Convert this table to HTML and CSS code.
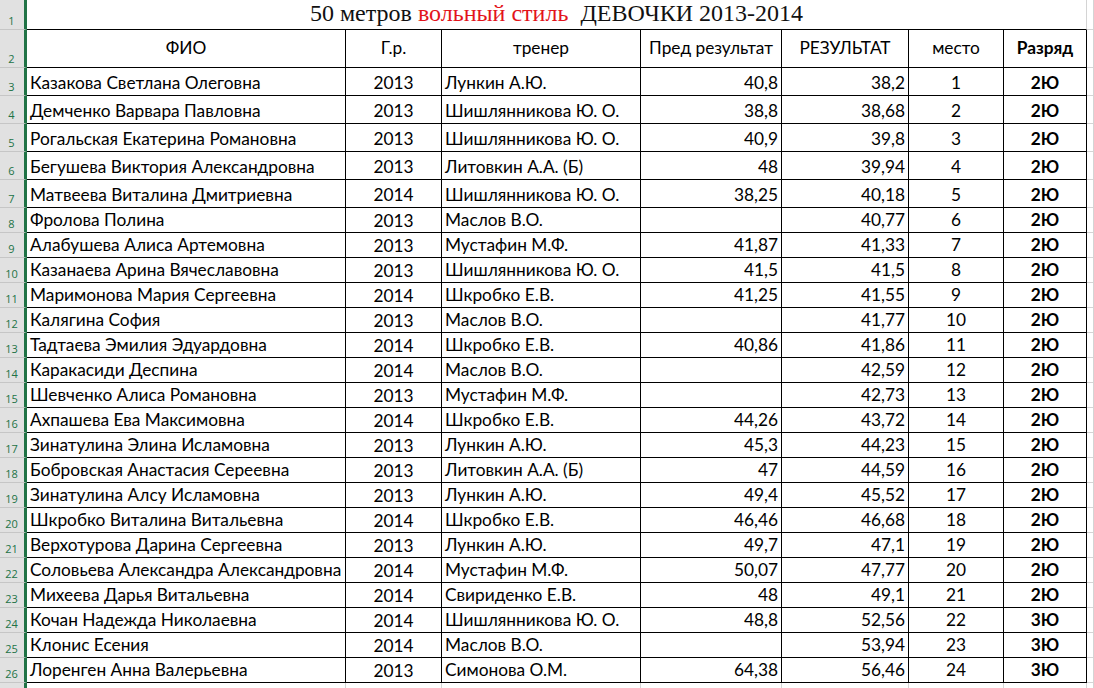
FILE: index.html
```html
<!DOCTYPE html>
<html lang="ru">
<head>
<meta charset="utf-8">
<title>50 метров вольный стиль</title>
<link rel="stylesheet" href="styles.css">
</head>
<body>
<div class="sheet">
  <div class="row r-title">
    <div class="rh">1</div>
    <div class="title">50 метров <span class="red">вольный стиль</span>  ДЕВОЧКИ 2013-2014</div>
    <div class="gh"></div>
  </div>
  <div class="row r-head">
    <div class="rh">2</div>
    <div class="c hd">ФИО</div>
    <div class="c hd">Г.р.</div>
    <div class="c hd">тренер</div>
    <div class="c hd">Пред результат</div>
    <div class="c hd">РЕЗУЛЬТАТ</div>
    <div class="c hd">место</div>
    <div class="c hd b">Разряд</div>
    <div class="gh"></div>
  </div>
  <div class="row r-tall"><div class="rh">3</div><div class="c nm">Казакова Светлана Олеговна</div><div class="c yr">2013</div><div class="c nm">Лункин А.Ю.</div><div class="c num">40,8</div><div class="c num">38,2</div><div class="c pl">1</div><div class="c rk">2Ю</div><div class="gh"></div></div>
  <div class="row r-tall"><div class="rh">4</div><div class="c nm">Демченко Варвара Павловна</div><div class="c yr">2013</div><div class="c nm">Шишлянникова Ю. О.</div><div class="c num">38,8</div><div class="c num">38,68</div><div class="c pl">2</div><div class="c rk">2Ю</div><div class="gh"></div></div>
  <div class="row r-tall"><div class="rh">5</div><div class="c nm">Рогальская Екатерина Романовна</div><div class="c yr">2013</div><div class="c nm">Шишлянникова Ю. О.</div><div class="c num">40,9</div><div class="c num">39,8</div><div class="c pl">3</div><div class="c rk">2Ю</div><div class="gh"></div></div>
  <div class="row r-tall"><div class="rh">6</div><div class="c nm">Бегушева Виктория Александровна</div><div class="c yr">2013</div><div class="c nm">Литовкин А.А. (Б)</div><div class="c num">48</div><div class="c num">39,94</div><div class="c pl">4</div><div class="c rk">2Ю</div><div class="gh"></div></div>
  <div class="row r-tall"><div class="rh">7</div><div class="c nm">Матвеева Виталина Дмитриевна</div><div class="c yr">2014</div><div class="c nm">Шишлянникова Ю. О.</div><div class="c num">38,25</div><div class="c num">40,18</div><div class="c pl">5</div><div class="c rk">2Ю</div><div class="gh"></div></div>
  <div class="row"><div class="rh">8</div><div class="c nm">Фролова Полина</div><div class="c yr">2013</div><div class="c nm">Маслов В.О.</div><div class="c num"></div><div class="c num">40,77</div><div class="c pl">6</div><div class="c rk">2Ю</div><div class="gh"></div></div>
  <div class="row"><div class="rh">9</div><div class="c nm">Алабушева Алиса Артемовна</div><div class="c yr">2013</div><div class="c nm">Мустафин М.Ф.</div><div class="c num">41,87</div><div class="c num">41,33</div><div class="c pl">7</div><div class="c rk">2Ю</div><div class="gh"></div></div>
  <div class="row"><div class="rh">10</div><div class="c nm">Казанаева Арина Вячеславовна</div><div class="c yr">2013</div><div class="c nm">Шишлянникова Ю. О.</div><div class="c num">41,5</div><div class="c num">41,5</div><div class="c pl">8</div><div class="c rk">2Ю</div><div class="gh"></div></div>
  <div class="row"><div class="rh">11</div><div class="c nm">Маримонова Мария Сергеевна</div><div class="c yr">2014</div><div class="c nm">Шкробко Е.В.</div><div class="c num">41,25</div><div class="c num">41,55</div><div class="c pl">9</div><div class="c rk">2Ю</div><div class="gh"></div></div>
  <div class="row"><div class="rh">12</div><div class="c nm">Калягина София</div><div class="c yr">2013</div><div class="c nm">Маслов В.О.</div><div class="c num"></div><div class="c num">41,77</div><div class="c pl">10</div><div class="c rk">2Ю</div><div class="gh"></div></div>
  <div class="row"><div class="rh">13</div><div class="c nm">Тадтаева Эмилия Эдуардовна</div><div class="c yr">2014</div><div class="c nm">Шкробко Е.В.</div><div class="c num">40,86</div><div class="c num">41,86</div><div class="c pl">11</div><div class="c rk">2Ю</div><div class="gh"></div></div>
  <div class="row"><div class="rh">14</div><div class="c nm">Каракасиди Деспина</div><div class="c yr">2014</div><div class="c nm">Маслов В.О.</div><div class="c num"></div><div class="c num">42,59</div><div class="c pl">12</div><div class="c rk">2Ю</div><div class="gh"></div></div>
  <div class="row"><div class="rh">15</div><div class="c nm">Шевченко Алиса Романовна</div><div class="c yr">2013</div><div class="c nm">Мустафин М.Ф.</div><div class="c num"></div><div class="c num">42,73</div><div class="c pl">13</div><div class="c rk">2Ю</div><div class="gh"></div></div>
  <div class="row"><div class="rh">16</div><div class="c nm">Ахпашева Ева Максимовна</div><div class="c yr">2014</div><div class="c nm">Шкробко Е.В.</div><div class="c num">44,26</div><div class="c num">43,72</div><div class="c pl">14</div><div class="c rk">2Ю</div><div class="gh"></div></div>
  <div class="row"><div class="rh">17</div><div class="c nm">Зинатулина Элина Исламовна</div><div class="c yr">2013</div><div class="c nm">Лункин А.Ю.</div><div class="c num">45,3</div><div class="c num">44,23</div><div class="c pl">15</div><div class="c rk">2Ю</div><div class="gh"></div></div>
  <div class="row"><div class="rh">18</div><div class="c nm">Бобровская Анастасия Сереевна</div><div class="c yr">2013</div><div class="c nm">Литовкин А.А. (Б)</div><div class="c num">47</div><div class="c num">44,59</div><div class="c pl">16</div><div class="c rk">2Ю</div><div class="gh"></div></div>
  <div class="row"><div class="rh">19</div><div class="c nm">Зинатулина Алсу Исламовна</div><div class="c yr">2013</div><div class="c nm">Лункин А.Ю.</div><div class="c num">49,4</div><div class="c num">45,52</div><div class="c pl">17</div><div class="c rk">2Ю</div><div class="gh"></div></div>
  <div class="row"><div class="rh">20</div><div class="c nm">Шкробко Виталина Витальевна</div><div class="c yr">2014</div><div class="c nm">Шкробко Е.В.</div><div class="c num">46,46</div><div class="c num">46,68</div><div class="c pl">18</div><div class="c rk">2Ю</div><div class="gh"></div></div>
  <div class="row"><div class="rh">21</div><div class="c nm">Верхотурова Дарина Сергеевна</div><div class="c yr">2013</div><div class="c nm">Лункин А.Ю.</div><div class="c num">49,7</div><div class="c num">47,1</div><div class="c pl">19</div><div class="c rk">2Ю</div><div class="gh"></div></div>
  <div class="row"><div class="rh">22</div><div class="c nm">Соловьева Александра Александровна</div><div class="c yr">2014</div><div class="c nm">Мустафин М.Ф.</div><div class="c num">50,07</div><div class="c num">47,77</div><div class="c pl">20</div><div class="c rk">2Ю</div><div class="gh"></div></div>
  <div class="row"><div class="rh">23</div><div class="c nm">Михеева Дарья Витальевна</div><div class="c yr">2014</div><div class="c nm">Свириденко Е.В.</div><div class="c num">48</div><div class="c num">49,1</div><div class="c pl">21</div><div class="c rk">2Ю</div><div class="gh"></div></div>
  <div class="row"><div class="rh">24</div><div class="c nm">Кочан Надежда Николаевна</div><div class="c yr">2014</div><div class="c nm">Шишлянникова Ю. О.</div><div class="c num">48,8</div><div class="c num">52,56</div><div class="c pl">22</div><div class="c rk">3Ю</div><div class="gh"></div></div>
  <div class="row"><div class="rh">25</div><div class="c nm">Клонис Есения</div><div class="c yr">2014</div><div class="c nm">Маслов В.О.</div><div class="c num"></div><div class="c num">53,94</div><div class="c pl">23</div><div class="c rk">3Ю</div><div class="gh"></div></div>
  <div class="row"><div class="rh">26</div><div class="c nm">Лоренген Анна Валерьевна</div><div class="c yr">2013</div><div class="c nm">Симонова О.М.</div><div class="c num">64,38</div><div class="c num">56,46</div><div class="c pl">24</div><div class="c rk">3Ю</div><div class="gh"></div></div>
  <div class="row r-tail"><div class="rh"></div><div class="g"></div><div class="g"></div><div class="g"></div><div class="g"></div><div class="g"></div><div class="g"></div><div class="g"></div><div class="g"></div></div>
</div>
</body>
</html>
```

FILE: styles.css
```css
* { box-sizing: border-box; }
html, body { margin: 0; padding: 0; background: #fff; }
body { width: 1094px; height: 688px; overflow: hidden; }

.sheet {
  display: flex;
  flex-direction: column;
  font-family: Lato, "Open Sans", sans-serif;
  font-size: 17.3px;
  color: #000;
}

.row {
  display: grid;
  grid-template-columns: 27px 319px 96px 199px 141px 127px 95px 83px 1fr;
  height: 25px;
}
.r-title { height: 30px; }
.r-head { height: 38px; }
.r-tall { height: 28px; }
.r-tail { height: 6px; }

.rh {
  background: #e1e1e1;
  border-right: 3px solid #217346;
  border-bottom: 1px solid #c6c6c6;
  color: #217346;
  font-family: "Open Sans", sans-serif;
  font-size: 11px;
  display: flex;
  align-items: flex-end;
  justify-content: center;
  padding: 0 1px 3px 0;
  line-height: 1;
}

.title {
  grid-column: 2 / 9;
  border-bottom: 1px solid #000;
  border-right: 1px solid #d4d4d4;
  font-family: "Liberation Serif", "Times New Roman", serif;
  font-size: 24px;
  color: #111;
  text-align: center;
  white-space: pre;
  line-height: 27px;
}
.red { color: #e3141b; }

.c {
  border-right: 1px solid #000;
  border-bottom: 1px solid #000;
  display: flex;
  align-items: flex-end;
  padding: 0 3px 4px 3px;
  white-space: nowrap;
  overflow: hidden;
  line-height: 1;
}

.gh {
  border-right: 1px solid #d4d4d4;
  border-bottom: 1px solid #d4d4d4;
}
.g {
  border-right: 1px solid #d4d4d4;
}

.hd {
  align-items: center;
  justify-content: center;
  padding: 0 2px 1px 2px;
}
.b { font-weight: 700; }

.nm { justify-content: flex-start; }
.yr {
  justify-content: center;
  align-items: center;
  padding-top: 2px;
  padding-bottom: 0;
}
.num { justify-content: flex-end; }
.pl { justify-content: center; }
.rk { justify-content: center; font-weight: 700; }
```
